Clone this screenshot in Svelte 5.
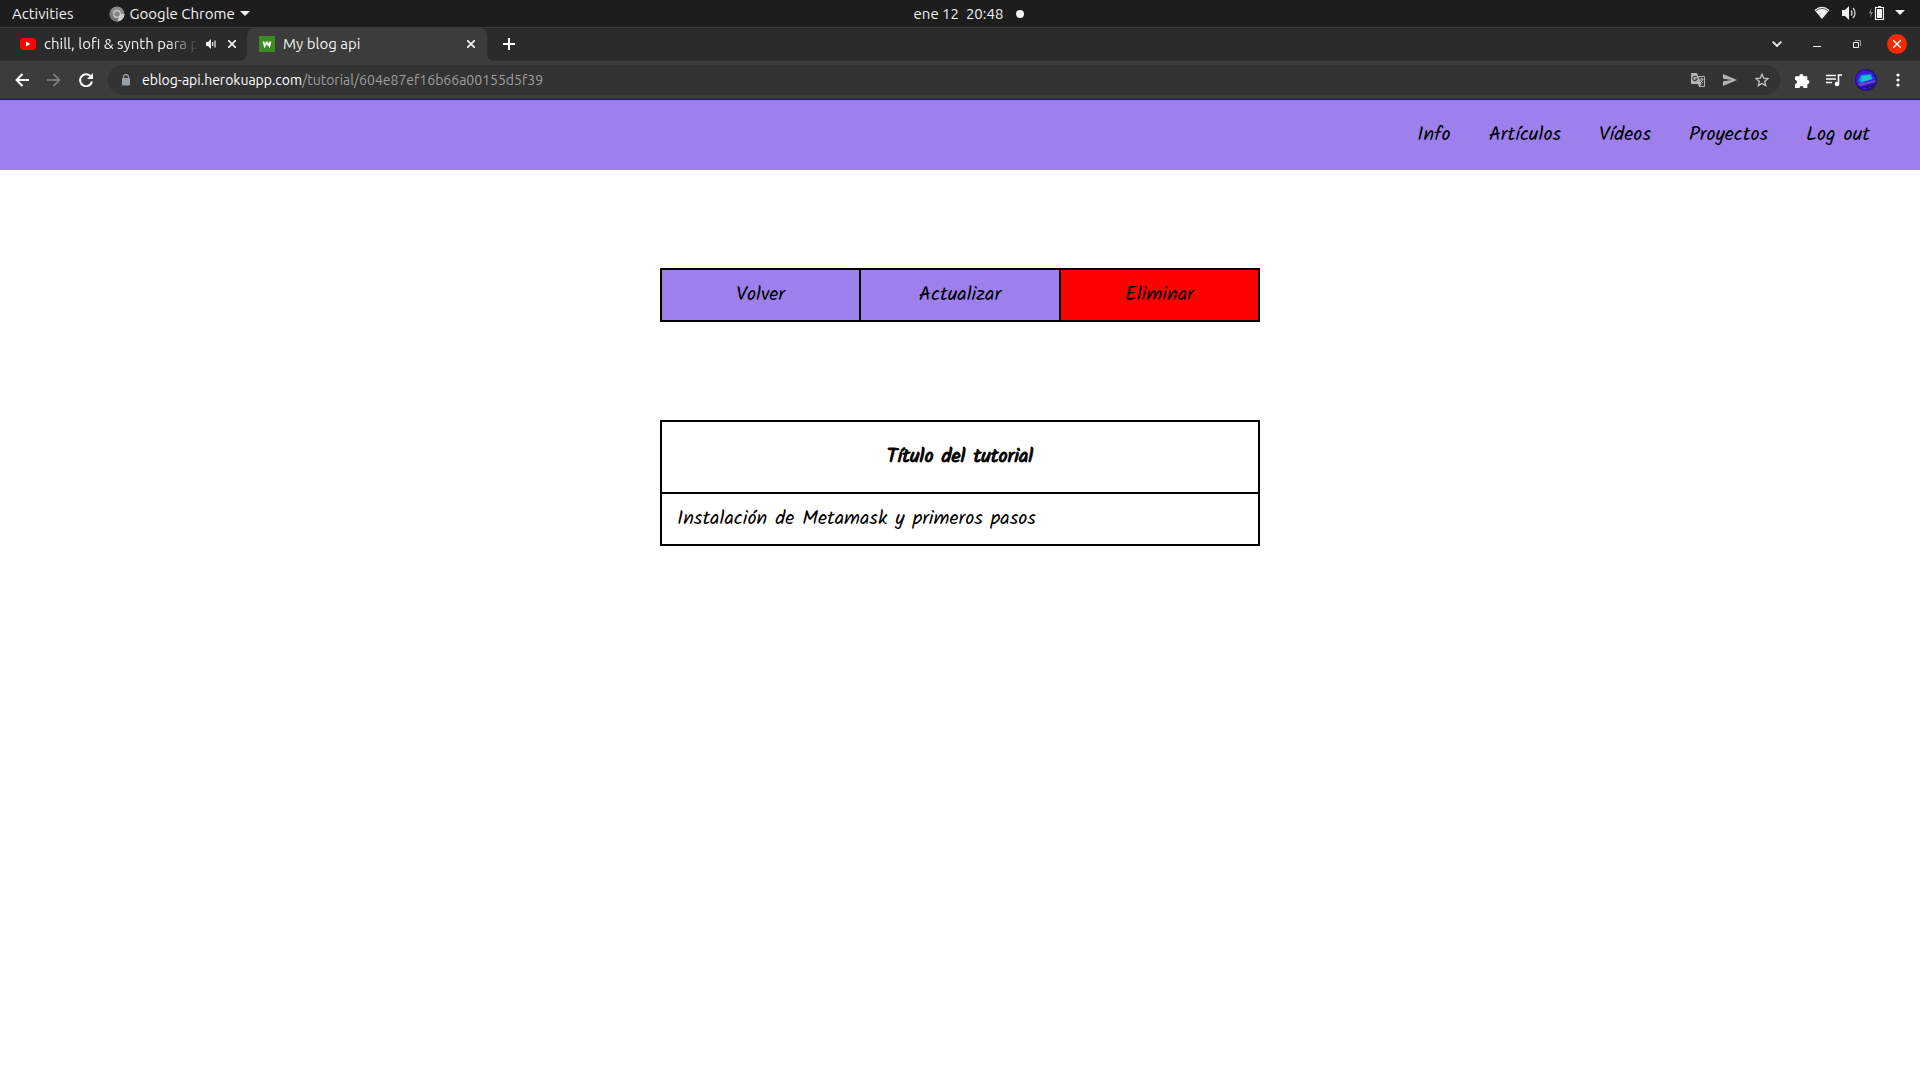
<script>
  const links = ['Info', 'Artículos', 'Vídeos', 'Proyectos', 'Log out'];
</script>

<div class="desktop">
  <header class="system">
    <div class="side">
      <button class="activities">Activities</button>
      <button class="app">
        <svg width="16" height="16" viewBox="0 0 16 16"><circle cx="8" cy="8" r="7.5" fill="#8b8b8b" /><path d="M8 8h7.5A7.5 7.5 0 0 1 8 15.5L10.5 10z" fill="#c9c9c9" /><path d="M1.5 4.3A7.5 7.5 0 0 0 8 15.5L10 11 5 9z" fill="#777" /><circle cx="8" cy="8" r="4" fill="#d0d0d0" /><circle cx="8" cy="8" r="2.8" fill="#858585" /></svg>
        <span>Google Chrome</span>
        <svg width="10" height="6" viewBox="0 0 10 6"><path d="M0 0h10L5 5z" fill="#f2f2f2" /></svg>
      </button>
    </div>
    <button class="clock"><span>ene 12&nbsp; 20:48</span><i class="dot"></i></button>
    <div class="side status">
      <svg width="16" height="14" viewBox="0 0 16 14"><path d="M.5 4Q8-2.500 15.500 4L8 13z" fill="#f2f2f2" /><path d="M1.800 4.800Q8 0 14.200 4.800" fill="none" stroke="#666" /></svg>
      <svg width="16" height="14" viewBox="0 0 16 14"><path d="M1 4h3l4-4v14l-4-4H1z" fill="#f2f2f2" /><path d="M10 4.500q2 2.500 0 5M12 2q4 5 0 10" fill="none" stroke="#d0d0d0" stroke-width="1.300" /></svg>
      <svg width="16" height="16" viewBox="0 0 16 16"><path d="M3.500 3 1 8.500h2L2 13l3-6H3z" fill="#888" /><path d="M7.500 2.500h8v12h-8z" fill="none" stroke="#f2f2f2" stroke-width="1.200" /><path d="M9 4h5v9H9zM10 1h3v1.500h-3z" fill="#f2f2f2" /></svg>
      <svg width="10" height="6" viewBox="0 0 10 6"><path d="M0 0h10L5 5z" fill="#f2f2f2" /></svg>
    </div>
  </header>

  <div class="tabs">
    <div class="tab first">
      <svg width="16" height="12" viewBox="0 0 16 12"><rect width="16" height="12" rx="3" fill="#f00" /><path d="M6 3.500v5L10.500 6z" fill="#fff" /></svg>
      <span class="title fade">chill, lofi &amp; synth para p</span>
      <svg width="10" height="10" viewBox="0 0 10 10"><path d="M0 3h2l3-3v10L2 7H0z" fill="#f2f2f2" /><path d="M6.700 3v4M9 1.500v7" stroke="#f2f2f2" stroke-width="1.200" /></svg>
      <button class="close" aria-label="Close tab"><svg width="8" height="8" viewBox="0 0 8 8"><path d="m0 0 8 8M8 0 0 8" stroke="#f2f2f2" stroke-width="1.700" /></svg></button>
    </div>
    <div class="tab active">
      <span class="favicon"><svg width="16" height="16" viewBox="0 0 16 16"><path d="m4.500 5.500 1.200 4.500L8 6.500l2.300 3.500 1.200-4.500" fill="none" stroke="#fff" stroke-width="1.800" /></svg></span>
      <span class="title">My blog api</span>
      <button class="close" aria-label="Close tab"><svg width="8" height="8" viewBox="0 0 8 8"><path d="m0 0 8 8M8 0 0 8" stroke="#f2f2f2" stroke-width="1.700" /></svg></button>
    </div>
    <button class="new" aria-label="New tab"><svg width="12" height="12" viewBox="0 0 12 12"><path d="M6 0v12M0 6h12" stroke="#fff" stroke-width="2" /></svg></button>
    <div class="window">
      <button aria-label="Search tabs"><svg width="10" height="6" viewBox="0 0 10 6"><path d="m.7.7 4.300 4.300L9.300.7" fill="none" stroke="#f2f2f2" stroke-width="1.800" /></svg></button>
      <button aria-label="Minimize"><svg width="8" height="8" viewBox="0 0 8 8"><path d="M0 6.500h8" stroke="#f2f2f2" /></svg></button>
      <button aria-label="Restore"><svg width="8" height="8" viewBox="0 0 8 8"><path d="M.5 2.500h5v5h-5z" fill="none" stroke="#f2f2f2" /><path d="M2 .5h5.500V6" fill="none" stroke="#999" /></svg></button>
      <button class="quit" aria-label="Close"><svg width="8" height="8" viewBox="0 0 8 8"><path d="m0 0 8 8M8 0 0 8" stroke="#fff" stroke-width="1.400" /></svg></button>
    </div>
  </div>

  <div class="toolbar">
    <div class="icons">
      <button aria-label="Back"><svg width="14" height="14" viewBox="0 0 14 14"><path d="M14 7H1.500M7.500 1l-6 6 6 6" fill="none" stroke="#fff" stroke-width="1.900" /></svg></button>
      <button aria-label="Forward"><svg width="14" height="14" viewBox="0 0 14 14"><path d="M0 7h12.500M6.500 1l6 6-6 6" fill="none" stroke="#868686" stroke-width="1.700" /></svg></button>
      <button aria-label="Reload"><svg width="14" height="14" viewBox="0 0 14 14"><path d="M12 3.700A6 6 0 1 0 13 8.500" fill="none" stroke="#fff" stroke-width="2" /><path d="M14 0v6H8z" fill="#fff" /></svg></button>
    </div>
    <div class="address">
      <svg width="10" height="12" viewBox="0 0 10 12"><rect x="1" y="4" width="8" height="7.500" rx="1" fill="#9aa0a6" /><path d="M2.500 5V3a2.500 2.500 0 0 1 5 0v2" fill="none" stroke="#9aa0a6" stroke-width="1.300" /></svg>
      <a class="url" href="#top"><b>eblog-api.herokuapp.com</b>/tutorial/604e87ef16b66a00155d5f39</a>
      <div class="icons">
        <button aria-label="Translate"><svg width="14" height="14" viewBox="0 0 14 14"><path d="M1 0h5l1 3h6q1 0 1 1v9q0 1-1 1H8l-1-3H1q-1 0-1-1V1q0-1 1-1z" fill="#b4b4b4" /><path d="M7.500 4H13v9H9l1.500-2z" fill="#3a3a3a" /><path d="M8.500 6h4M10.500 5v1m1.500 0q-.5 2-3 4m.5-3q1 2 2.500 3" fill="none" stroke="#b4b4b4" /><path d="M5.800 4.200a2.200 2.200 0 1 0 .3 1.900H4.200" fill="none" stroke="#393939" stroke-width="1.100" /></svg></button>
        <button aria-label="Share"><svg width="14" height="12" viewBox="0 0 14 12"><path d="M0 0l14 6-14 6V7.300L9 6 0 4.700z" fill="#b4b4b4" /></svg></button>
        <button aria-label="Bookmark"><svg width="14" height="14" viewBox="0 0 14 14"><path d="m7 1.300 1.700 3.900 4.200.4-3.200 2.800 1 4.200L7 10.400l-3.700 2.200 1-4.200L1.100 5.600l4.200-.4z" fill="none" stroke="#c4c4c4" stroke-width="1.300" /></svg></button>
      </div>
    </div>
    <div class="icons">
      <button aria-label="Extensions"><svg width="15" height="15" viewBox="0 0 14 14"><path d="M1 3h3a2 2 0 1 1 4 0h3.500v3.500a2 2 0 1 1 0 4V14H8a1.900 1.900 0 0 0-3.800 0H0v-3.700a1.900 1.900 0 0 0 0-3.800V4q0-1 1-1z" fill="#fff" /></svg></button>
      <button aria-label="Media"><svg width="16" height="13" viewBox="0 0 16 13"><path d="M0 1.500h10M0 5h10M0 8.500h6M12.500 10V1H16" fill="none" stroke="#fff" stroke-width="1.600" /><circle cx="11" cy="10" r="2.300" fill="#fff" /></svg></button>
      <button aria-label="Profile"><svg width="22" height="22" viewBox="0 0 22 22"><circle cx="11" cy="11" r="11" fill="#20107c" /><path d="M2 5 8 1l9 2 4 7-2 5L5 18l-4-5z" fill="#3d1be0" /><path d="m6 6 10-1 2 5-12 4-3-2z" fill="#1686e8" /><path d="m7 7 8-1 2 4-11 3z" fill="#18c8c8" /><path d="m2 15 19-4-1 2-15 4z" fill="#6a48c8" /><path d="m6 19 5-1 1 3zM13 18l4-1-2 3z" fill="#3a1ccc" /></svg></button>
      <button aria-label="Menu"><svg width="4" height="14" viewBox="0 0 4 14"><circle cx="2" cy="2" r="1.600" fill="#fff" /><circle cx="2" cy="7" r="1.600" fill="#fff" /><circle cx="2" cy="12" r="1.600" fill="#fff" /></svg></button>
    </div>
  </div>

  <nav>
    {#each links as link}<a href="#top">{link}</a>{/each}
  </nav>

  <main>
    <div class="commands">
      <button>Volver</button>
      <button>Actualizar</button>
      <button class="danger">Eliminar</button>
    </div>
    <table>
      <thead><tr><th>Título del tutorial</th></tr></thead>
      <tbody><tr><td>Instalación de Metamask y primeros pasos</td></tr></tbody>
    </table>
  </main>
</div>

<style>
  :global(body) { margin: 0; background: #fff; }
  .desktop { font: 15px/20px Ubuntu, "Noto Sans", sans-serif; color: #f2f2f2; }
  button { border: 0; padding: 0; margin: 0; background: none; color: inherit; font: inherit; display: flex; align-items: center; justify-content: center; }
  svg { display: block; flex: none; }
  a { text-decoration: none; color: inherit; }

  .system { height: 26px; display: flex; align-items: center; padding: 0 12px 1px; background: #1d1d1d; }
  .system button { padding-top: 1px; }
  .side { flex: 1; display: flex; align-items: center; }
  .app { margin-left: 35px; gap: 5px; }
  .system .clock { gap: 13px; padding-left: 21px; }
  .dot { width: 8px; height: 8px; border-radius: 50%; background: #f2f2f2; }
  .status { justify-content: flex-end; gap: 11px; padding-right: 3px; }

  .tabs { height: 33px; border-top: 1px solid #3c3c3c; display: flex; background: #2b2b2b; }
  .tab { box-sizing: border-box; width: 240px; display: flex; align-items: center; padding: 0 12px 1px; gap: 8px; }
  .tab.first { width: 247px; padding: 0 11px 1px 20px; }
  .active { position: relative; background: #3c3c3c; border-radius: 8px 8px 0 0; }
  .active::before, .active::after { content: ""; position: absolute; bottom: 0; width: 8px; height: 8px; }
  .active::before { right: 100%; background: radial-gradient(circle at 0 0, transparent 8px, #3c3c3c 8px); }
  .active::after { left: 100%; background: radial-gradient(circle at 100% 0, transparent 8px, #3c3c3c 8px); }
  .title { flex: 1; white-space: nowrap; overflow: hidden; }
  .fade { mask-image: linear-gradient(90deg, #000 80%, transparent); }
  .favicon { background: #3c8c20; }
  .close { width: 8px; margin-left: 4px; }
  .new { width: 44px; padding-bottom: 1px; }
  .window { margin-left: auto; display: flex; align-items: center; gap: 20px; padding: 0 13px 1px 0; }
  .window button { width: 20px; height: 20px; border-radius: 50%; }
  .window .quit { background: #f42c04; }

  .toolbar { height: 38px; display: flex; align-items: center; gap: 6px; padding: 0 6px; background: #3c3c3c; border-bottom: 1px solid #202020; font-size: 14px; }
  .address { flex: 1; height: 30px; border-radius: 15px; background: #333; display: flex; align-items: center; padding: 0 2px 0 13px; gap: 11px; }
  .url { flex: 1; color: #9e9e9e; }
  .url b { font-weight: 400; color: #fff; }
  .icons { display: flex; align-items: center; }
  .icons button { width: 32px; height: 30px; }

  nav, main { font: 20px/30px Kalam, Lato, sans-serif; color: #000; }
  nav { background: #9d80ec; padding: 20px 50px; display: flex; justify-content: flex-end; gap: 38px; }
  main { width: 600px; max-width: 100%; margin: 98px auto; }
  .commands { display: grid; grid-template-columns: repeat(3, 1fr); gap: 2px; padding: 2px; background: #000; }
  .commands button { height: 50px; background: #9d80ec; }
  .commands .danger { background: #f00; }
  table { width: 100%; margin-top: 98px; border-collapse: collapse; }
  th, td { border: 2px solid #000; padding: 10px 15px; text-align: left; }
  th { text-align: center; padding: 20px 15px; font-weight: 400; -webkit-text-stroke: 1px #000; }
</style>
